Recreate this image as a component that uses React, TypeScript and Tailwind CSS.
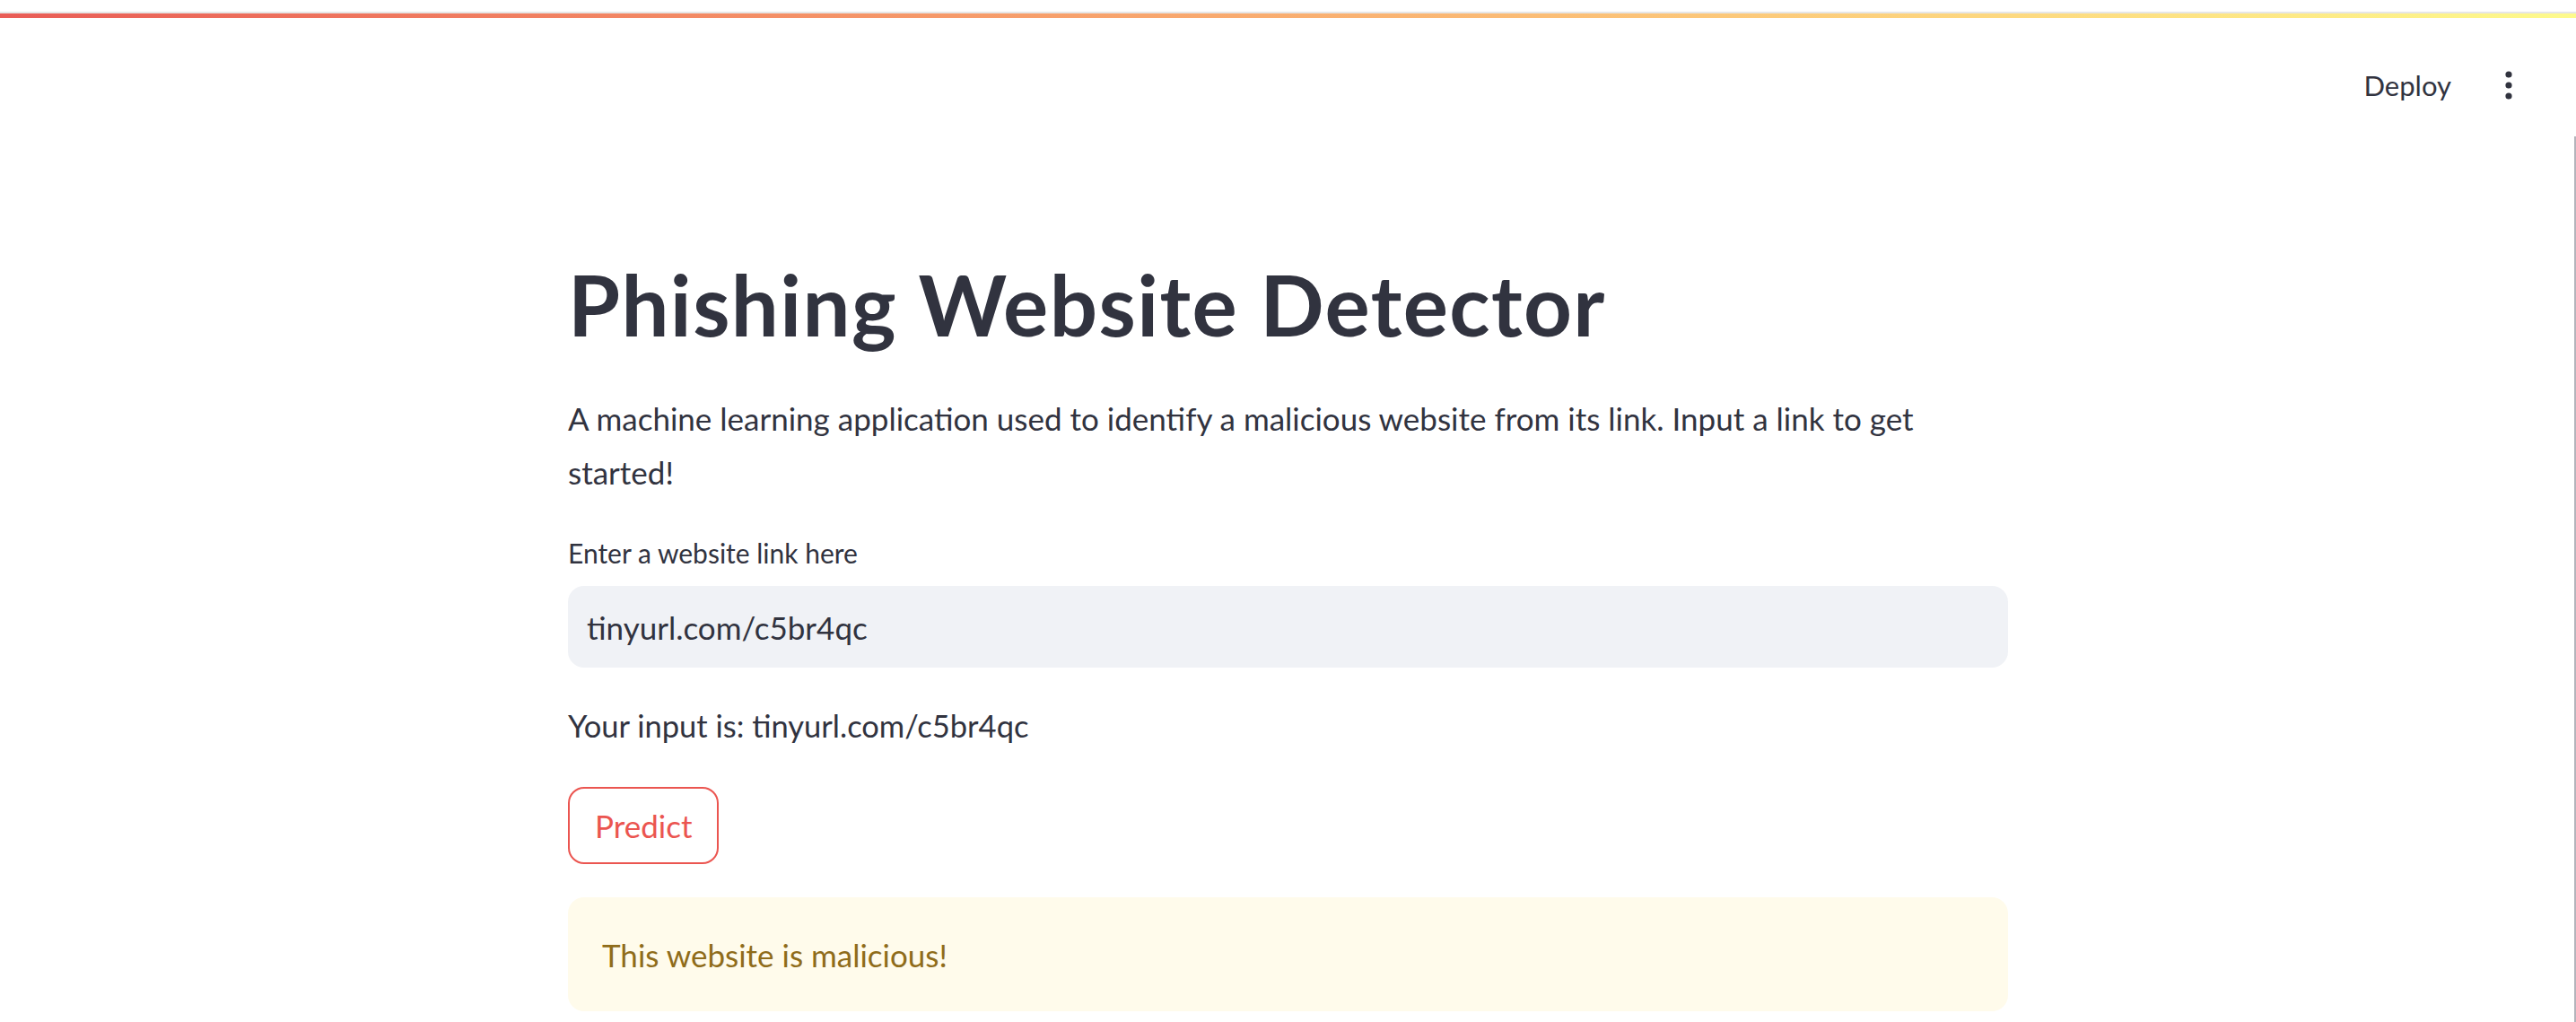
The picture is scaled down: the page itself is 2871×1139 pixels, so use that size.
import React from 'react';

const font = { fontFamily: 'Lato, "Noto Sans", sans-serif' };

const MenuDots: React.FC = () => (
  <svg width="8" height="32" viewBox="0 0 8 32" className="text-[#31333f]">
    <circle cx="4" cy="4" r="3.6" fill="currentColor" />
    <circle cx="4" cy="16" r="3.6" fill="currentColor" />
    <circle cx="4" cy="28" r="3.6" fill="currentColor" />
  </svg>
);

const App: React.FC = () => {
  const link = 'tinyurl.com/c5br4qc';

  return (
    <div className="relative h-[1139px] overflow-hidden bg-white text-[#31333f]" style={font}>
      {/* top decoration */}
      <div className="pt-[13px]">
        <div className="h-[2px] bg-[#e6e6e6]" />
        <div className="h-[5px] bg-gradient-to-r from-[#e95c56] to-[#fdfa8c]" />
      </div>

      {/* header */}
      <div className="flex h-[150px] items-center justify-end pr-[71px]">
        <button className="text-[31px] leading-none text-[#31333f]">Deploy</button>
        <div className="ml-[60px] flex items-center">
          <MenuDots />
        </div>
      </div>

      {/* main block */}
      <main className="mx-auto mt-[109px] w-[1605px]">
        <h1 className="text-[94px] font-bold leading-[120px] tracking-[1.4px]">
          Phishing Website Detector
        </h1>

        <p className="mt-[37px] text-[35px] leading-[60px]">
          A machine learning application used to identify a malicious website from its link. Input a link to get
          <br />
          started!
        </p>

        <label className="mt-[40px] block text-[30px] leading-[40px]">Enter a website link here</label>
        <div className="mt-[17px] flex h-[91px] items-center rounded-[18px] bg-[#f0f2f6] px-[21px]">
          <span className="text-[35px] leading-[1.2]">{link}</span>
        </div>

        <p className="mt-[40px] text-[34.5px] leading-[50px]">Your input is: {link}</p>

        <button className="mt-[43px] flex h-[86px] items-center rounded-[18px] border-2 border-[#eb5550] px-[28px] text-[35px] leading-[1.2] text-[#eb5550]">
          Predict
        </button>

        <div className="mt-[37px] flex h-[127px] items-center rounded-[18px] bg-[#fffbeb] pl-[38px]">
          <span className="text-[35px] leading-[1.2] text-[#8f6c1a]">This website is malicious!</span>
        </div>
      </main>

      {/* scrollbar edge */}
      <div className="absolute bottom-0 right-0 top-[152px] w-[2px] bg-[#b4b4bb]" />
    </div>
  );
};

export default App;
